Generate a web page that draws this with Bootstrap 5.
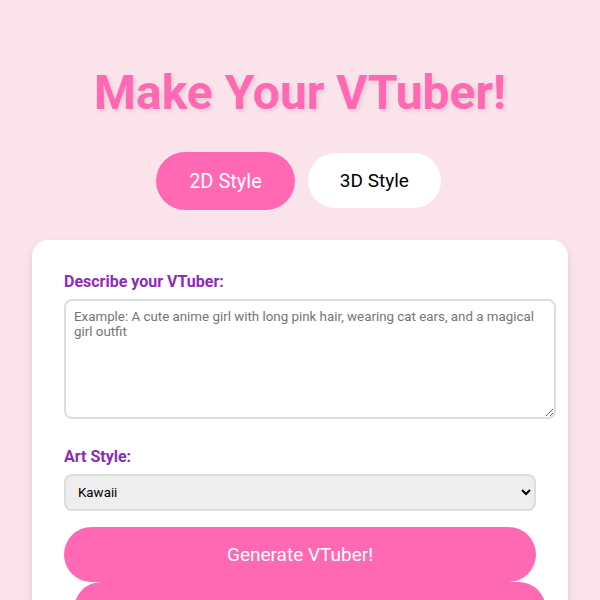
<!DOCTYPE html>
<html lang="en">
<head>
<meta charset="utf-8">
<meta name="viewport" content="width=device-width, initial-scale=1">
<title>Make Your VTuber!</title>
<link href="https://cdn.jsdelivr.net/npm/bootstrap@5.3.0/dist/css/bootstrap.min.css" rel="stylesheet">
<style>
  body { background: #fae3ea; font-family: Roboto, sans-serif; color: #000; }
  .maker { max-width: 800px; padding: 64px 32px; }
  .maker-title { font-size: 48px; line-height: 57px; color: #ff69b4; text-shadow: 2px 2px 4px rgba(0, 0, 0, .1); }
  .pill { border: 0; border-radius: 32px; font-size: 19px; line-height: 23px; padding: 16px 32px; }
  .style-pill { background: #fff; color: #000; }
  .pill-pink, .pill-pink:hover { background: #ff69b4; color: #fff; }
  /* the chosen style grows a little around its own centre */
  .style-pill.active { background: #ff69b4; color: #fff; font-size: 20px; line-height: 24px; padding: 17px 33px; margin: -2px -3px; }
  .panel { background: #fff; border-radius: 16px; box-shadow: 0 4px 8px rgba(0, 0, 0, .1); }
  .field-label { color: #8e2ab8; font-size: 16px; line-height: 19px; }
  .field { display: block; border: 2px solid #ddd; border-radius: 8px; font-size: revert; }
  .prompt { width: calc(100% + 20px); height: 120px; padding: 8px; margin-bottom: 28px; line-height: 15px; resize: both; }
  .prompt::placeholder { color: #757575; }
  .art { background: #eee; color: #000; padding: 8px; height: 37px; }
  .result { position: relative; left: 10px; }
</style>
</head>
<body>
<main class="maker container-fluid">
  <h1 class="maker-title fw-bold text-center mb-0">Make Your VTuber!</h1>
  <div class="d-flex justify-content-center align-items-center gap-3 my-4 py-2">
    <button type="button" class="pill style-pill active">2D Style</button>
    <button type="button" class="pill style-pill">3D Style</button>
  </div>
  <form class="panel p-4">
    <div class="p-2">
      <label class="field-label fw-bold d-block mb-2" for="prompt">Describe your VTuber:</label>
      <textarea id="prompt" class="field prompt" placeholder="Example: A cute anime girl with long pink hair, wearing cat ears, and a magical girl outfit"></textarea>
      <label class="field-label fw-bold d-block mb-2" for="art">Art Style:</label>
      <select id="art" class="field art w-100 mb-3">
        <option>Kawaii</option>
        <option>Chibi</option>
        <option>Anime</option>
      </select>
      <button type="submit" class="pill pill-pink d-block w-100">Generate VTuber!</button>
      <button type="button" class="pill pill-pink result d-block w-100">Download VTuber</button>
    </div>
  </form>
</main>
<script src="https://cdn.jsdelivr.net/npm/bootstrap@5.3.0/dist/js/bootstrap.bundle.min.js"></script>
</body>
</html>
